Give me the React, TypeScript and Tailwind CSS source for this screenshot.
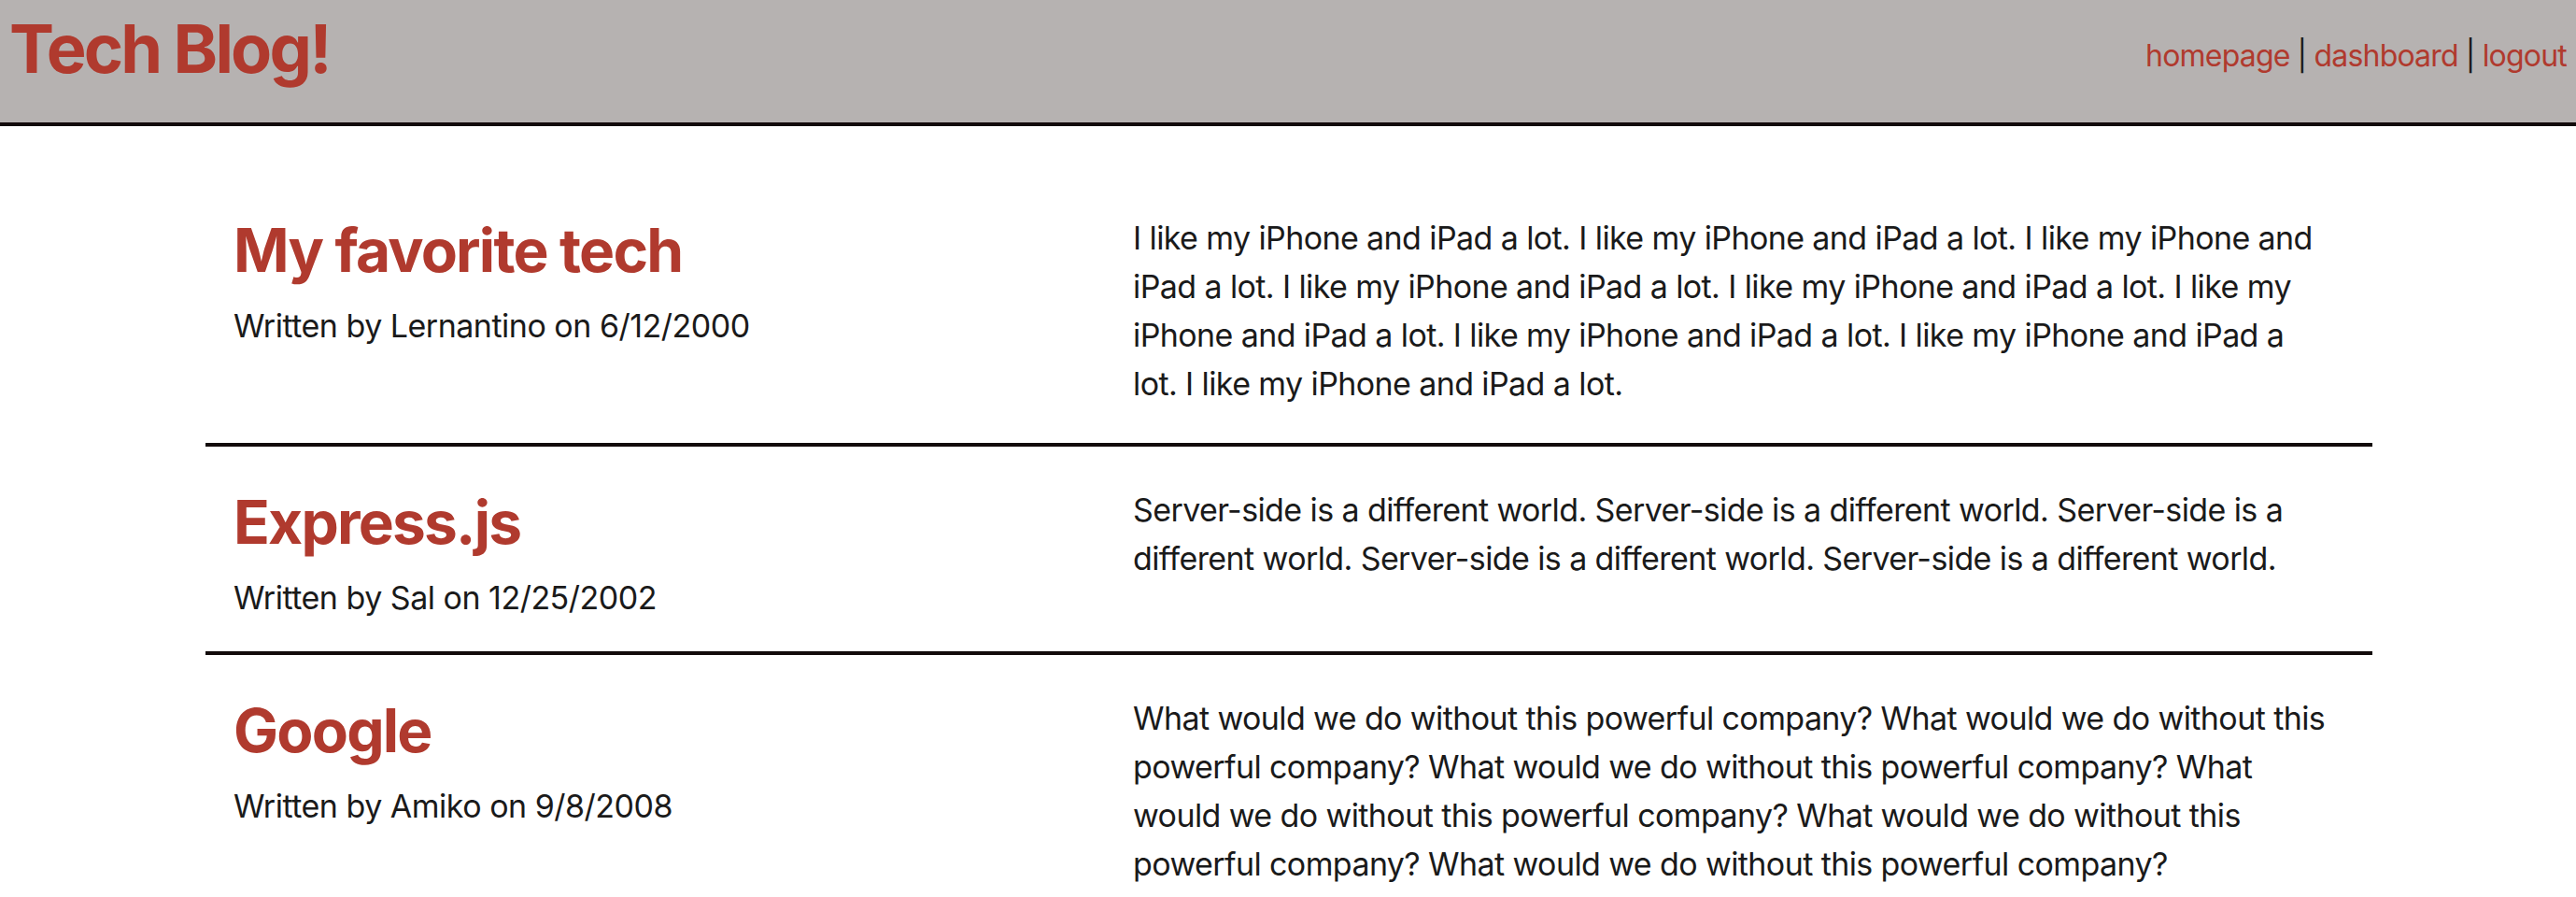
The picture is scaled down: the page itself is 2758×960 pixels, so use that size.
const posts = [
  {
    title: 'My favorite tech',
    author: 'Lernantino',
    date: '6/12/2000',
    body: 'I like my iPhone and iPad a lot. I like my iPhone and iPad a lot. I like my iPhone and iPad a lot. I like my iPhone and iPad a lot. I like my iPhone and iPad a lot. I like my iPhone and iPad a lot. I like my iPhone and iPad a lot. I like my iPhone and iPad a lot. I like my iPhone and iPad a lot.',
  },
  {
    title: 'Express.js',
    author: 'Sal',
    date: '12/25/2002',
    body: 'Server-side is a different world. Server-side is a different world. Server-side is a different world. Server-side is a different world. Server-side is a different world.',
  },
  {
    title: 'Google',
    author: 'Amiko',
    date: '9/8/2008',
    body: 'What would we do without this powerful company? What would we do without this powerful company? What would we do without this powerful company? What would we do without this powerful company? What would we do without this powerful company? What would we do without this powerful company?',
  },
];

const links = ['homepage', 'dashboard', 'logout'];

function Header() {
  return (
    <header className="flex items-start justify-between h-[135px] bg-[#b6b2b1] border-b-4 border-[#120a0a] px-[10px]">
      <h1 className="pt-[8px] text-[72px] leading-[87px] font-bold tracking-[-2.8px] text-[#b03a2e]">Tech Blog!</h1>
      <nav className="mt-[40px] flex gap-[8px] text-[32px] leading-[39px] tracking-[-0.8px] text-[#1a1a1a]">
        {links.map((l, i) => (
          <span key={l} className="flex gap-[8px]">
            {i > 0 && <span>|</span>}
            <a href="#" className="text-[#b03a2e]">{l}</a>
          </span>
        ))}
      </nav>
    </header>
  );
}

export default function App() {
  return (
    <div className="min-h-screen bg-white text-[#1a1a1a] font-['Inter','Liberation_Sans',sans-serif]">
      <Header />
      <main className="pt-[52px] ml-[220px] w-[2320px]">
        {posts.map((p, i) => (
          <article
            key={p.title}
            className={`flex pt-[42px] pb-[37px] ${i < posts.length - 1 ? 'border-b-4 border-[#120a0a]' : ''}`}
          >
            <div className="w-[993px] pl-[30px]">
              <h2 className="text-[64px] leading-[77px] font-bold tracking-[-1.8px] text-[#b03a2e]">{p.title}</h2>
              <p className="mt-[22px] text-[34px] leading-[41px] tracking-[-0.5px]">
                Written by {p.author} on {p.date}
              </p>
            </div>
            <p className="w-[1282px] text-[34px] leading-[52px] tracking-[-0.6px]">{p.body}</p>
          </article>
        ))}
      </main>
    </div>
  );
}
